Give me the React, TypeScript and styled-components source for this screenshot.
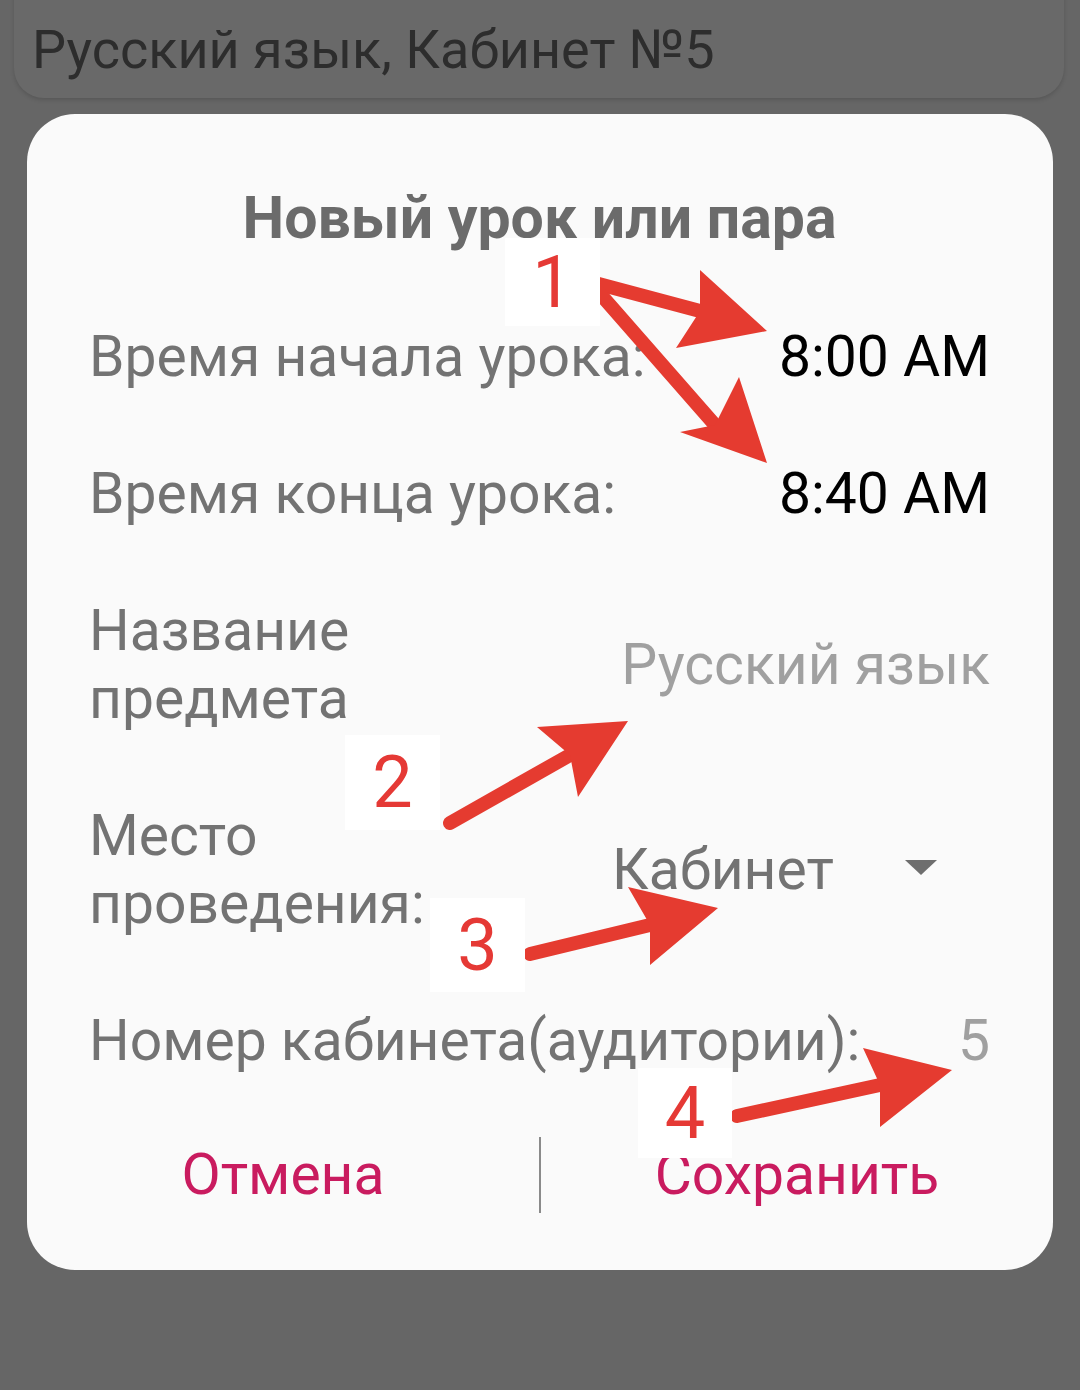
import React from 'react';
import styled, { createGlobalStyle } from 'styled-components';

const GlobalStyle = createGlobalStyle`
  html, body {
    margin: 0;
    padding: 0;
    background: #666666;
  }
  * { box-sizing: border-box; }
`;

const RED = '#e53b30';

type Mark = { n: string; x: number; y: number; w: number; h: number };

const marks: Mark[] = [
  { n: '1', x: 505, y: 238, w: 95, h: 88 },
  { n: '2', x: 345, y: 735, w: 95, h: 95 },
  { n: '3', x: 430, y: 898, w: 95, h: 94 },
  { n: '4', x: 638, y: 1068, w: 94, h: 90 },
];

// line start, tip, and the two back corners of the head
const arrows = [
  { from: [595, 283], to: [700, 311], tip: [767, 331], a: [700, 270], b: [676, 348] },
  { from: [595, 288], to: [715, 425], tip: [767, 463], a: [739, 377], b: [680, 432] },
  { from: [450, 823], to: [570, 755], tip: [628, 721], a: [537, 727], b: [578, 797] },
  { from: [530, 954], to: [650, 925], tip: [718, 908], a: [628, 887], b: [650, 965] },
  { from: [737, 1116], to: [880, 1085], tip: [952, 1070], a: [863, 1048], b: [880, 1127] },
];

const App: React.FC = () => {
  return (
    <Page>
      <GlobalStyle />
      <TopCard>
        <TopCardText>Русский язык, Кабинет №5</TopCardText>
      </TopCard>

      <Dialog>
        <Title>Новый урок или пара</Title>
        <Rows>
          <Row>
            <Label>Время начала урока:</Label>
            <TimeValue>8:00 AM</TimeValue>
          </Row>
          <Row>
            <Label>Время конца урока:</Label>
            <TimeValue>8:40 AM</TimeValue>
          </Row>
          <Row>
            <Label>
              Название
              <br />
              предмета
            </Label>
            <Hint>Русский язык</Hint>
          </Row>
          <Row>
            <Label>
              Место
              <br />
              проведения:
            </Label>
            <Spinner>
              <SpinnerText>Кабинет</SpinnerText>
              <Caret />
            </Spinner>
          </Row>
          <Row>
            <Label>Номер кабинета(аудитории):</Label>
            <Hint>5</Hint>
          </Row>
        </Rows>
        <Buttons>
          <DialogButton>Отмена</DialogButton>
          <Divider />
          <DialogButton>Сохранить</DialogButton>
        </Buttons>
      </Dialog>

      <Overlay width="1080" height="1390" viewBox="0 0 1080 1390">
        {arrows.map((ar, i) => (
          <g key={i}>
            <line
              x1={ar.from[0]}
              y1={ar.from[1]}
              x2={ar.to[0]}
              y2={ar.to[1]}
              stroke={RED}
              strokeWidth={14}
              strokeLinecap="round"
            />
            <polygon
              points={`${ar.a[0]},${ar.a[1]} ${ar.tip[0]},${ar.tip[1]} ${ar.b[0]},${ar.b[1]} ${ar.to[0]},${ar.to[1]}`}
              fill={RED}
            />
          </g>
        ))}
      </Overlay>

      {marks.map((m) => (
        <NumberTag key={m.n} style={{ left: m.x, top: m.y, width: m.w, height: m.h }}>
          {m.n}
        </NumberTag>
      ))}
    </Page>
  );
};

const Page = styled.div`
  position: relative;
  width: 1080px;
  height: 1390px;
  overflow: hidden;
  background: #666666;
  font-family: Roboto, 'Noto Sans', sans-serif;
`;

const TopCard = styled.div`
  margin: -40px 16px 0 14px;
  height: 138px;
  background: #696969;
  border-radius: 30px;
  box-shadow: 0 2px 4px rgba(0, 0, 0, 0.15);
  padding: 62px 0 0 18px;
`;

const TopCardText = styled.div`
  font-size: 54px;
  line-height: 56px;
  color: #2d2d2d;
`;

const Dialog = styled.div`
  margin: 16px 27px 0 27px;
  height: 1156px;
  background: #fafafa;
  border-radius: 48px;
  padding: 76px 63px 0 62px;
  display: flex;
  flex-direction: column;
`;

const Title = styled.div`
  font-size: 59px;
  line-height: 56px;
  font-weight: 700;
  color: #6b6b6b;
  text-align: center;
  margin-bottom: 77px;
`;

const Rows = styled.div`
  display: flex;
  flex-direction: column;
  gap: 69px;
`;

const Row = styled.div`
  display: flex;
  align-items: center;
  justify-content: space-between;
`;

const Label = styled.div`
  font-size: 57px;
  line-height: 68px;
  color: #737373;
  white-space: nowrap;
`;

const TimeValue = styled.div`
  font-size: 57px;
  line-height: 68px;
  color: #000000;
`;

const Hint = styled.div`
  font-size: 57px;
  line-height: 68px;
  color: #a0a0a0;
`;

const Spinner = styled.div`
  width: 378px;
  display: flex;
  align-items: center;
  justify-content: space-between;
  padding-right: 53px;
`;

const SpinnerText = styled.div`
  font-size: 57px;
  line-height: 68px;
  color: #737373;
`;

const Caret = styled.div`
  width: 0;
  height: 0;
  border-left: 16px solid transparent;
  border-right: 16px solid transparent;
  border-top: 15px solid #6e6e6e;
  margin-top: -6px;
`;

const Buttons = styled.div`
  margin: 55px -63px 0 -62px;
  display: flex;
  align-items: center;
  height: 90px;
`;

const DialogButton = styled.div`
  flex: 1;
  text-align: center;
  font-size: 57px;
  line-height: 68px;
  color: #c91b5f;
`;

const Divider = styled.div`
  width: 2px;
  height: 76px;
  background: #8a8a8a;
`;

const Overlay = styled.svg`
  position: absolute;
  left: 0;
  top: 0;
  pointer-events: none;
`;

const NumberTag = styled.div`
  position: absolute;
  background: #ffffff;
  display: flex;
  align-items: center;
  justify-content: center;
  font-family: Roboto, 'Noto Sans', sans-serif;
  font-size: 72px;
  color: #e53935;
`;

export default App;
